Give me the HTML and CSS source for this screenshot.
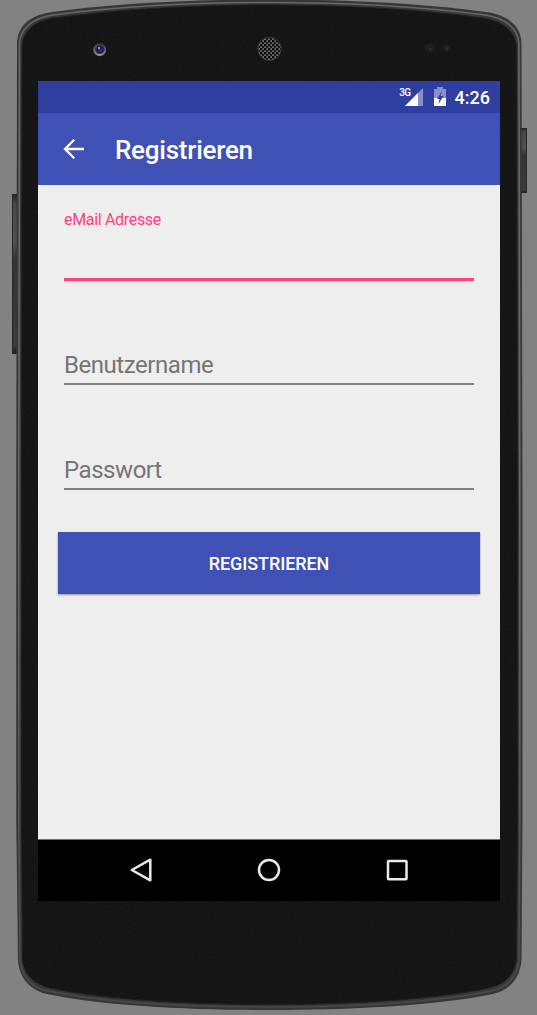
FILE: index.html
```html
<!DOCTYPE html>
<html lang="de">
<head>
<meta charset="utf-8">
<title>Registrieren</title>
<link rel="stylesheet" href="styles.css">
</head>
<body>
<main class="phone">
  <svg class="shell" width="537" height="1015" viewBox="0 0 537 1015" aria-hidden="true">
    <defs>
      <linearGradient id="key" x1="0" y1="0" x2="0" y2="1">
        <stop offset="0" stop-color="#222"/><stop offset=".06" stop-color="#484848"/>
        <stop offset=".3" stop-color="#505050"/><stop offset=".42" stop-color="#333"/>
        <stop offset=".95" stop-color="#3b3b3b"/><stop offset="1" stop-color="#1c1c1c"/>
      </linearGradient>
      <linearGradient id="rim" gradientUnits="userSpaceOnUse" x1="0" y1="0" x2="0" y2="1010">
        <stop offset="0" stop-color="#666"/><stop offset=".5" stop-color="#666"/><stop offset="1" stop-color="#484848"/>
      </linearGradient>
      <linearGradient id="lens" x1="0" y1="0" x2="0" y2="1">
        <stop offset="0" stop-color="#333"/><stop offset="1" stop-color="#999"/>
      </linearGradient>
      <pattern id="mesh" width="4" height="4" patternUnits="userSpaceOnUse">
        <rect width="4" height="4" fill="#686868"/>
        <rect x="0" y="0" width="2.3" height="2.3" fill="#080808"/>
        <rect x="2" y="2" width="2" height="2" fill="#161616"/>
      </pattern>
      <filter id="grain" x="0" y="0" width="100%" height="100%">
        <feTurbulence type="fractalNoise" baseFrequency=".6" numOctaves="2" seed="4"/>
        <feColorMatrix values="0 0 0 0 1  0 0 0 0 1  0 0 0 0 1  .05 0 0 0 -.02"/>
        <feComposite in2="SourceGraphic" operator="in"/>
      </filter>
    </defs>
    <rect x="12" y="194" width="6" height="160" fill="url(#key)"/>
    <path d="M12.5 194v160" stroke="#292929"/>
    <rect x="521" y="128" width="6" height="65" fill="url(#key)"/>
    <path d="M526.5 128v65" stroke="#292929"/>
    <path fill="#373737" d="M16.200 500L17 43C17.500 26 30 15 52 12C119 3 194 -.5 269 -.5S419 3 486 12C508 15 521 26 521.500 43L522.500 500V820L521.500 960C520 978 510 990 493 994C433 1006 351 1010 269 1010S105 1006 47 994C30 990 19 978 18 960L16.200 820Z"/>
    <path fill="none" stroke="url(#rim)" stroke-width="1.600" d="M18.800 500L19.500 44C20 29 32 18 53 15C120 6 194 2.500 269 2.500S418 6 485 15C506 18 518.500 29 519 44L519.800 500V820L519 959C518 976 507 988 491 991C432 1003 351 1007 269 1007S106 1003 48 991C32 988 21 976 20 959L18.800 820Z"/>
    <path id="face" fill="#141414" stroke="#1e1e1e" d="M21.500 500L22 48C22 31 35 21 54 18C121 9 195 5 269 5S417 9 483 18C502 21 516 31 516.500 48L517.500 500V820L516.500 958C515 974 506 984 489 988C431 1000 350 1004.500 269 1004.500S107 1000 50 988C34 984 23 974 22.500 958L21.500 820Z"/>
    <use href="#face" filter="url(#grain)"/>
    <circle cx="99.700" cy="49.500" r="6.500" fill="url(#lens)"/>
    <circle cx="99.700" cy="49.300" r="4.800" fill="#393939"/>
    <circle cx="100" cy="49.500" r="3.500" fill="#181858"/>
    <circle cx="100.400" cy="50.300" r="1.700" fill="#2929a0"/>
    <circle cx="99" cy="48" r="1" fill="#b6b6dc"/>
    <circle cx="269.500" cy="48.800" r="11.700" fill="url(#mesh)" stroke="#383838"/>
    <circle cx="430" cy="48" r="4.800" fill="#201d1d"/>
    <circle cx="430.500" cy="49" r="1" fill="#432a2a"/>
    <circle cx="447" cy="48" r="3.500" fill="#222"/>
    <circle cx="447" cy="48.500" r="1" fill="#403030"/>
  </svg>

  <div class="screen">
    <div class="status">
      <span class="network">3G</span>
      <svg class="signal" width="18" height="18" viewBox="0 0 18 18"><path fill="#8590cc" d="M18 0V18H0Z"/><path fill="#fff" d="M13 5V18H0Z"/></svg>
      <svg class="battery" width="12" height="19" viewBox="0 0 12 19"><path fill="#8792cc" d="M3 0H9V2H12V18Q12 19 11 19H1Q0 19 0 18V2H3Z"/><path fill="#fff" d="M0 11H12V18Q12 19 11 19H1Q0 19 0 18Z"/><path fill="#303f9f" d="M8 4L3 12H5.500L4.500 17L9.500 9H6.500Z"/></svg>
      <time class="time">4:26</time>
    </div>
    <header class="toolbar">
      <svg class="back" width="22" height="22" viewBox="0 0 22 22"><path d="M21 11H2M11.200 1.700L2 11L11.200 20.300" fill="none" stroke="#fff" stroke-width="2.300"/></svg>
      <h1 class="title">Registrieren</h1>
    </header>
    <form class="form">
      <div class="field field-active"><span>eMail Adresse</span></div>
      <div class="field"><span>Benutzername</span></div>
      <div class="field"><span>Passwort</span></div>
      <button class="submit" type="button">REGISTRIEREN</button>
    </form>
    <nav class="navigation">
      <svg width="26" height="26" viewBox="0 0 26 26"><path d="M22.300 2.700V23.300L3.800 13Z"/></svg>
      <svg width="26" height="26" viewBox="0 0 26 26"><circle cx="13" cy="13" r="10"/></svg>
      <svg width="26" height="26" viewBox="0 0 26 26"><rect x="4" y="4" width="18.500" height="18.300" rx=".7"/></svg>
    </nav>
  </div>
</main>
</body>
</html>
```

FILE: styles.css
```css
* { box-sizing: border-box; }

body {
  margin: 0;
  background: #828282;
  font-family: Roboto, sans-serif;
}

.phone {
  position: relative;
  width: 537px;
  height: 1015px;
  padding: 81px 37px 114px 38px;
  overflow: hidden;
}

.shell { position: absolute; inset: 0; }

.screen {
  position: relative;
  display: flex;
  flex-direction: column;
  width: 462px;
  height: 820px;
  background: #eee;
}

.status {
  display: flex;
  height: 32px;
  padding-right: 10px;
  justify-content: flex-end;
  background: #303f9f;
  color: #fff;
}

.network {
  height: 12px;
  margin: 6px -6px 0 0;
  font: 500 10px/12px Roboto, sans-serif;
  letter-spacing: -.6px;
  z-index: 1;
}

.signal { margin-top: 7px; }
.battery { margin: 6px 9px 0 11px; }
.time { font-size: 18px; font-weight: 500; line-height: 33px; }

.toolbar {
  display: flex;
  align-items: center;
  height: 72px;
  padding-left: 25px;
  gap: 30px;
  background: #3f51b5;
  color: #fff;
}

.title {
  margin: 2px 0 0;
  font-size: 26px;
  font-weight: 500;
  letter-spacing: -.25px;
  line-height: 32px;
}

.form {
  display: flex;
  flex: 1;
  flex-direction: column;
  padding: 0 20px;
}

.field {
  display: flex;
  align-items: flex-end;
  height: 105px;
  margin: 0 6px;
  padding-bottom: 3px;
  border-bottom: 2px solid #808080;
  color: #757575;
  font-size: 24px;
  letter-spacing: -.45px;
  line-height: 30px;
}

.field-active {
  align-items: flex-start;
  height: 96px;
  padding: 25px 0 0;
  border-bottom: 3px solid #ff4081;
  color: #ff4081;
  font-size: 16px;
  letter-spacing: -.32px;
  line-height: 20px;
}

.field-active + .field { height: 104px; }

.submit {
  height: 62px;
  margin: 42px 0 0;
  padding: 1px 0 0;
  border: 0;
  background: #3f51b5;
  box-shadow: 0 1px 2px rgb(0 0 0 / 38%);
  color: #fff;
  font: 500 18px/30px Roboto, sans-serif;
  letter-spacing: -.08px;
}

.navigation {
  display: flex;
  height: 62px;
  padding: 0 90px 2px;
  align-items: center;
  justify-content: space-between;
  border-top: 1px solid #707070;
  background: #000;
}

.navigation svg {
  fill: none;
  stroke: #e9e9e9;
  stroke-width: 2.5;
  stroke-linejoin: round;
}
```
